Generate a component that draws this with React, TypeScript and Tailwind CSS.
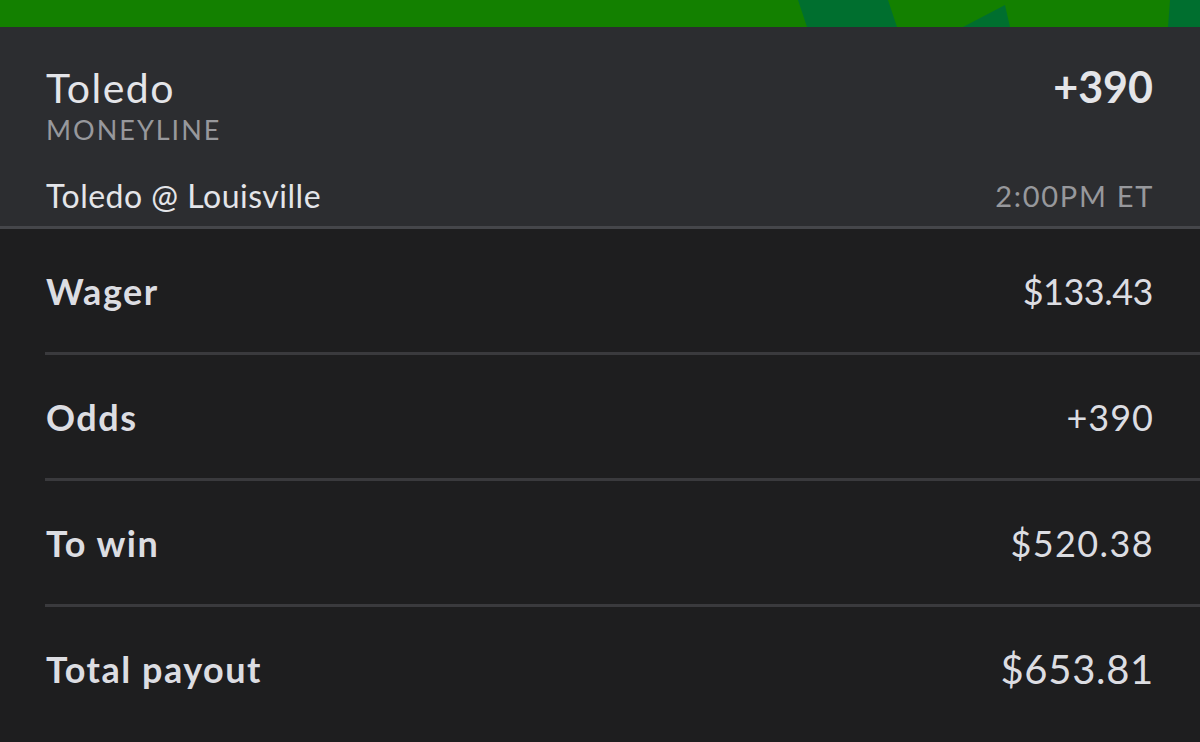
import React from "react";

const rows = [
  { label: "Wager", value: "$133.43", valueClass: "text-[36px] tracking-[-0.5px]" },
  { label: "Odds", value: "+390", valueClass: "text-[36px] tracking-[1px] -mr-[1px]" },
  { label: "To win", value: "$520.38", valueClass: "text-[36px] tracking-[1.4px] -mr-[1px]" },
  { label: "Total payout", value: "$653.81", valueClass: "text-[40px] tracking-[0.7px] -mr-[1px]" },
];

export default function App() {
  return (
    <div className="w-[1200px] h-[742px] overflow-hidden bg-[#1e1e1f] flex flex-col font-['Lato','Open_Sans',sans-serif]">
      <div className="h-[27px] shrink-0 bg-[#138000]">
        <svg width="1200" height="27" viewBox="0 0 1200 27" className="block">
          <polygon points="798,0 888,0 897,27 807,27" fill="#006f2f" />
          <polygon points="963,27 1005,5 1010,27" fill="#006f2f" />
          <polygon points="1170,0 1200,0 1200,27 1168,27" fill="#006f2f" />
        </svg>
      </div>
      <div className="h-[202px] shrink-0 bg-[#2c2d30] px-[46px] pt-[36px] flex flex-col border-b-[3px] border-[#45464a]">
        <div className="flex justify-between items-baseline">
          <div className="text-[41px] leading-[48px] text-[#e4e5e9] font-normal tracking-[1.5px]">Toledo</div>
          <div className="text-[43px] leading-[48px] font-bold text-[#e4e5e9] pr-[1px]">+390</div>
        </div>
        <div className="text-[27px] leading-[30px] tracking-[2px] text-[#97989c] mt-[3px]">MONEYLINE</div>
        <div className="flex justify-between items-center mt-[33px]">
          <div className="text-[32px] leading-[36px] text-[#e4e5e9] tracking-[0.5px]">Toledo @ Louisville</div>
          <div className="text-[29px] leading-[36px] tracking-[1.7px] text-[#97989c]">2:00PM ET</div>
        </div>
      </div>
      <div className="flex flex-col pl-[45px]">
        {rows.map((r, i) => (
          <div key={r.label} className={`h-[126px] flex flex-col ${i < rows.length - 1 ? "border-b-[3px] border-[#3a3a3d]" : ""}`}>
            <div className="h-[123px] flex items-center justify-between pr-[47px]">
              <div className="text-[36px] font-bold text-[#dcdde2] pl-[1px] tracking-[1.5px]">{r.label}</div>
              <div className={`font-normal text-[#dcdde2] ${r.valueClass}`}>{r.value}</div>
            </div>
          </div>
        ))}
      </div>
    </div>
  );
}
